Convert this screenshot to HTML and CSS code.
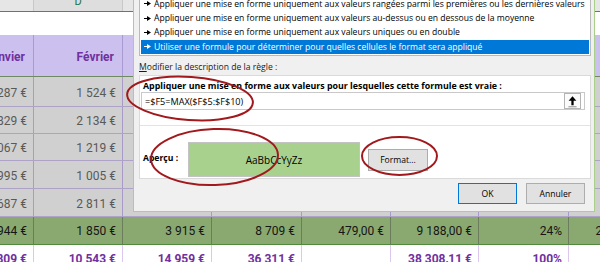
FILE: index.html
```html
<!DOCTYPE html>
<html lang="fr">
<head>
<meta charset="utf-8">
<title>Règle de mise en forme</title>
<link rel="stylesheet" href="styles.css">
</head>
<body>
<div class="screen">
  <div class="sheet">
    <div class="row hdr">
      <div>C</div><div class="sel">D</div><div></div><div></div><div></div><div></div><div></div><div></div>
    </div>
    <div class="row blank">
      <div></div><div></div><div></div><div></div><div></div><div></div><div></div><div></div>
    </div>
    <div class="row head">
      <div>Janvier</div><div>Février</div><div></div><div></div><div></div><div></div><div></div><div></div>
    </div>
    <div class="row data r1">
      <div>1 287 €</div><div>1 524 €</div><div></div><div></div><div></div><div></div><div></div><div></div>
    </div>
    <div class="row data r2">
      <div>1 829 €</div><div>2 134 €</div><div></div><div></div><div></div><div></div><div></div><div></div>
    </div>
    <div class="row data r3">
      <div>1 067 €</div><div>1 219 €</div><div></div><div></div><div></div><div></div><div></div><div></div>
    </div>
    <div class="row data r4">
      <div>995 €</div><div>1 005 €</div><div></div><div></div><div></div><div></div><div></div><div></div>
    </div>
    <div class="row data r5">
      <div>687 €</div><div>2 811 €</div><div></div><div></div><div></div><div></div><div></div><div></div>
    </div>
    <div class="row green">
      <div>944 €</div><div>1 850 €</div><div>3 915 €</div><div>8 709 €</div><div>479,00 €</div><div>9 188,00 €</div><div>24%</div><div>2 205,00 €</div>
    </div>
    <div class="row total">
      <div>6 809 €</div><div>10 543 €</div><div>14 959 €</div><div>36 311 €</div><div></div><div>38 308,11 €</div><div>100%</div><div></div>
    </div>
  </div>

  <div class="dialog">
    <div class="rules">
      <div class="rule"><svg class="tri" viewBox="0 0 7 5"><path d="M0 2.1h3v0.8H0z M3 0 L7 2.5 L3 5 Z"/></svg><span>Appliquer une mise en forme uniquement aux cellules qui contiennent</span></div>
      <div class="rule"><svg class="tri" viewBox="0 0 7 5"><path d="M0 2.1h3v0.8H0z M3 0 L7 2.5 L3 5 Z"/></svg><span>Appliquer une mise en forme uniquement aux valeurs rangées parmi les premières ou les dernières valeurs</span></div>
      <div class="rule"><svg class="tri" viewBox="0 0 7 5"><path d="M0 2.1h3v0.8H0z M3 0 L7 2.5 L3 5 Z"/></svg><span>Appliquer une mise en forme uniquement aux valeurs au-dessus ou en dessous de la moyenne</span></div>
      <div class="rule"><svg class="tri" viewBox="0 0 7 5"><path d="M0 2.1h3v0.8H0z M3 0 L7 2.5 L3 5 Z"/></svg><span>Appliquer une mise en forme uniquement aux valeurs uniques ou en double</span></div>
      <div class="rule sel"><svg class="tri" viewBox="0 0 7 5"><path d="M0 2.1h3v0.8H0z M3 0 L7 2.5 L3 5 Z"/></svg><span>Utiliser une formule pour déterminer pour quelles cellules le format sera appliqué</span></div>
    </div>
    <div class="desc"><u>M</u>odifier la description de la règle :</div>
    <div class="group">
      <div class="formula-sec">
        <div class="strong">Appliquer une mise en forme aux valeurs pour lesquelles cette formule est vraie :</div>
        <div class="input">
          <span class="formula">=$F5=MAX($F$5:$F$10)</span>
          <div class="pick"><svg viewBox="0 0 16 16"><path d="M8 1.5 L3.2 7 H6.6 V12.5 H9.4 V7 H12.8 Z"/><path class="ul" d="M3 14.5 H13"/></svg></div>
        </div>
      </div>
      <div class="preview-sec">
        <div class="strong lbl">Aperçu :</div>
        <div class="sample">AaBbCcYyZz</div>
        <div class="btn fmt">Format...</div>
      </div>
    </div>
    <div class="actions">
      <div class="btn ok">OK</div>
      <div class="btn">Annuler</div>
    </div>
  </div>

  <svg class="marks" viewBox="0 0 600 262">
    <ellipse cx="190" cy="98.5" rx="63" ry="21.5" transform="rotate(4 190 98.5)"/>
    <ellipse cx="214.5" cy="157" rx="63.5" ry="28" transform="rotate(-2 214.5 157)"/>
    <ellipse cx="399.5" cy="156" rx="37.5" ry="19"/>
  </svg>
</div>
</body>
</html>
```

FILE: styles.css
```css
body {
  margin: 0;
  background: #ffffff;
  font-family: Roboto, "Liberation Sans", sans-serif;
}

.screen {
  position: relative;
  width: 600px;
  height: 262px;
  overflow: hidden;
}

/* ---------- spreadsheet ---------- */
.sheet {
  margin-left: -55px;
  margin-top: -9px;
  width: 713px;
}

.row {
  display: grid;
  grid-template-columns: 89px 89px 89px 90px 89px 88px 90px 89px;
}

.row > div {
  box-sizing: border-box;
  display: flex;
  align-items: center;
  justify-content: flex-end;
  padding-right: 6px;
  white-space: nowrap;
  overflow: hidden;
  border-right: 1px solid transparent;
}

.hdr {
  height: 21px;
  background: #e6e6e6;
  border-bottom: 1px solid #3f8f57;
  box-sizing: border-box;
}
.hdr > div {
  justify-content: center;
  align-items: flex-end;
  padding: 0 0 3px 0;
  font-size: 11px;
  color: #444444;
  border-right-color: #c8c8c8;
}
.hdr > div.sel {
  color: #217346;
  background: #dedede;
}

.blank {
  height: 23px;
  background: #ffffff;
}

.head {
  height: 42px;
  background: #ccc1ee;
  border-bottom: 1px solid #6f8a62;
  box-sizing: border-box;
}
.head > div {
  font-size: 12px;
  font-weight: 700;
  color: #7030a0;
  padding-right: 8px;
  padding-top: 3px;
  border-right-color: #a99bd2;
}

.data {
  background: #d0d0d0;
  border-bottom: 1px solid #aea3c6;
  box-sizing: border-box;
}
.data > div {
  font-size: 12px;
  color: #595959;
  padding-top: 2px;
  border-right-color: #a99bc9;
}
.r1 { height: 30px; }
.r2 { height: 27px; }
.r3 { height: 27px; }
.r4 { height: 28px; }
.r5 { height: 28px; }

.green {
  height: 28px;
  background: #8aa970;
  border-bottom: 1px solid #4f8a3d;
  box-sizing: border-box;
}
.green > div {
  font-size: 12px;
  color: #151515;
  border-right-color: #6b7d5c;
}

.total {
  height: 28px;
  background: #ffffff;
}
.total > div {
  font-size: 12px;
  font-weight: 700;
  color: #7030a0;
  border-right-color: #dcc8ee;
}

/* ---------- dialog ---------- */
.dialog {
  position: absolute;
  left: 133px;
  top: -30px;
  width: 462px;
  box-sizing: border-box;
  background: #f0f0f0;
  border: 1px solid #a8cf8c;
  padding: 4px 3px 7px 5px;
  font-family: "Open Sans", "Noto Sans", sans-serif;
  font-size: 8.6px;
  color: #000000;
}

.rules {
  box-sizing: border-box;
  height: 81px;
  background: #ffffff;
  border: 1px solid #b9b9b9;
  padding: 0 1px 1px 1px;
  display: flex;
  flex-direction: column;
  justify-content: flex-end;
  overflow: hidden;
}

.rule {
  flex: none;
  height: 14.4px;
  display: flex;
  align-items: center;
  gap: 3px;
  padding-left: 3px;
  white-space: nowrap;
  overflow: hidden;
}
.rule .tri {
  width: 7px;
  height: 5px;
  flex: none;
  fill: #000000;
}
.rule.sel {
  background: #0078d7;
  color: #ffffff;
}
.rule.sel .tri {
  fill: #ffffff;
}

.desc {
  margin-top: 5px;
  height: 12px;
  line-height: 12px;
  color: #1a1a1a;
}
.desc u {
  text-decoration: underline;
}

.group {
  margin-top: 2px;
  width: 452px;
  box-sizing: border-box;
  border: 1px solid #dadada;
  background: #ffffff;
}

.strong {
  font-weight: 700;
}

.formula-sec {
  padding: 5px 4px 15px 1px;
  border-bottom: 1px solid #e3e3e3;
}
.formula-sec .strong {
  height: 11px;
  line-height: 11px;
  margin-left: 2px;
  font-size: 8.85px;
}

.input {
  box-sizing: border-box;
  width: 444px;
  height: 18px;
  border: 1px solid #c9c9c9;
  background: #ffffff;
  display: flex;
  align-items: center;
  justify-content: space-between;
  padding: 0 3px 0 3px;
}
.formula {
  font-size: 9.1px;
}
.pick {
  box-sizing: border-box;
  width: 17px;
  height: 16px;
  border: 1px solid #b4b4b4;
  background: #fbfbfb;
  display: flex;
  align-items: center;
  justify-content: center;
}
.pick svg {
  width: 13px;
  height: 13px;
  fill: #000000;
}
.pick .ul {
  fill: none;
  stroke: #8a8a8a;
  stroke-width: 1.2;
}

.preview-sec {
  display: flex;
  align-items: center;
  padding: 16px 0 1px 3px;
}
.lbl {
  width: 45px;
  flex: none;
  margin-bottom: 4px;
}
.sample {
  box-sizing: border-box;
  width: 172px;
  height: 35px;
  background: #a9d18e;
  border: 1px solid #c3c3c3;
  display: flex;
  align-items: center;
  justify-content: center;
  font-size: 10px;
  color: #000000;
}

.btn {
  box-sizing: border-box;
  background: #e1e1e1;
  border: 1px solid #adadad;
  display: flex;
  align-items: center;
  justify-content: center;
}
.fmt {
  margin-left: 8px;
  width: 60px;
  height: 22px;
}

.actions {
  margin-top: 4px;
  display: flex;
  justify-content: flex-end;
  gap: 9px;
  padding-right: 6px;
}
.actions .btn {
  width: 59px;
  height: 21px;
}
.actions .ok {
  border-color: #0078d7;
}

/* ---------- annotations ---------- */
.marks {
  position: absolute;
  left: 0;
  top: 0;
  width: 600px;
  height: 262px;
  pointer-events: none;
}
.marks ellipse {
  fill: none;
  stroke: #a1191c;
  stroke-width: 2;
}
```
